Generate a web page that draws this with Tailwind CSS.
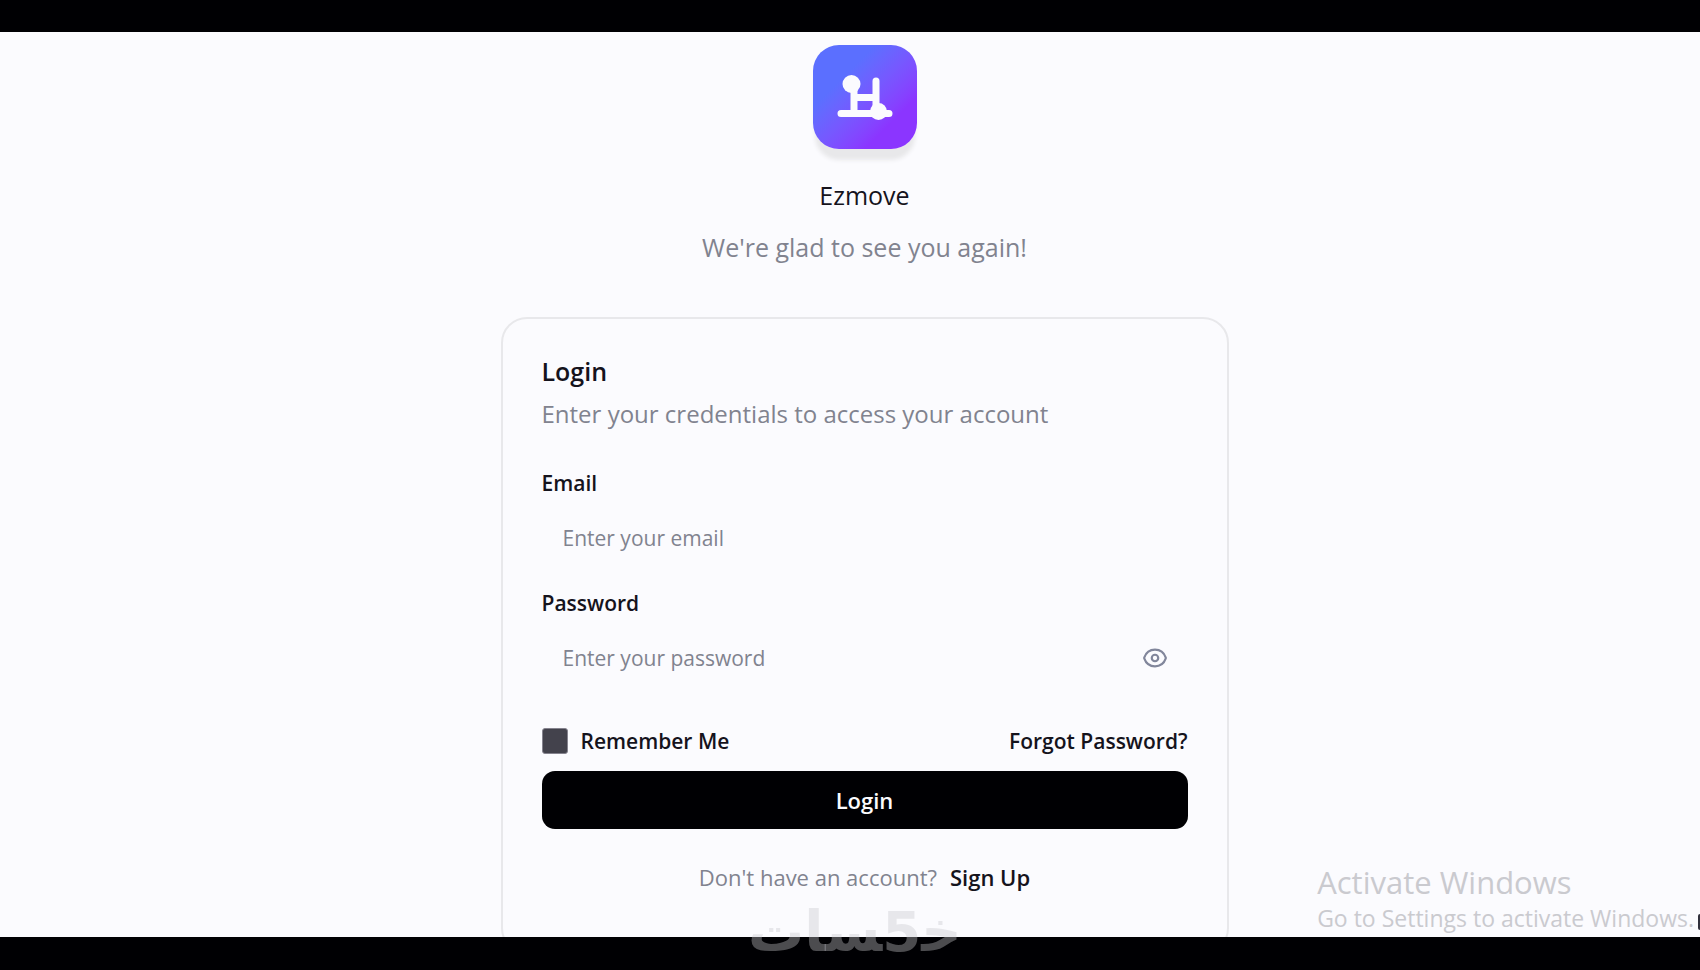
<!DOCTYPE html>
<html lang="en">
<head>
<meta charset="utf-8">
<meta name="viewport" content="width=device-width, initial-scale=1">
<title>Ezmove - Login</title>
<script src="https://cdn.jsdelivr.net/npm/@tailwindcss/browser@4"></script>
</head>
<body class="relative flex h-screen flex-col overflow-hidden bg-[#fbfbfe] font-['Open_Sans','Noto_Sans',sans-serif] text-[#15131c]">
  <div class="h-8 shrink-0 bg-[#000003]"></div>

  <main class="flex min-h-0 flex-1 flex-col items-center overflow-hidden pl-[29px] pt-[13px]">
    <header class="flex flex-col items-center text-center">
      <div class="flex size-[104px] items-center justify-center rounded-[26px] bg-linear-to-br from-[#5b6fff] from-30% to-[#8b35ff] to-75% shadow-[0_13px_4px_-2px_#e8e8ea]">
        <svg class="size-[104px]" viewBox="0 0 104 104" fill="none" stroke="#fbfbfe" stroke-width="7" stroke-linecap="round" aria-hidden="true">
          <path d="M28 68.500H76M41 40V67M63 36V66M41 52.500H63" />
          <circle cx="38.500" cy="39" r="9" fill="#fbfbfe" stroke="none" />
          <circle cx="65.500" cy="66.500" r="8.500" fill="#fbfbfe" stroke="none" />
        </svg>
      </div>
      <h1 class="mt-[26px] text-[25px] leading-10">Ezmove</h1>
      <p class="mt-3 text-[25px] leading-10 text-[#81838f]">We're glad to see you again!</p>
    </header>

    <section class="mt-[50px] w-full max-w-[728px] shrink-0 rounded-[26px] border-2 border-[#e8e8eb] px-[39px] pb-[59px] pt-[39px]">
      <h2 class="text-[25px] font-semibold leading-[26px]">Login</h2>
      <p class="mt-[10px] text-2xl leading-10 text-[#81838f]">Enter your credentials to access your account</p>

      <form class="mt-[37px]">
        <label for="email" class="block text-[21px] font-semibold leading-6">Email</label>
        <input id="email" type="email" placeholder="Enter your email" class="mt-[14px] block h-[58px] w-full rounded-xl bg-transparent px-[21px] text-[21px] placeholder:text-[#81838f]">

        <label for="password" class="mt-6 block text-[21px] font-semibold leading-6">Password</label>
        <div class="mt-[14px] flex h-[58px] items-center">
          <input id="password" type="password" placeholder="Enter your password" class="h-full min-w-0 flex-1 rounded-xl bg-transparent px-[21px] text-[21px] placeholder:text-[#81838f]">
          <button type="button" aria-label="Show password" class="mr-5 text-[#81869b]">
            <svg class="size-[26px]" viewBox="0 0 24 24" fill="none" stroke="currentColor" stroke-width="2" stroke-linecap="round" stroke-linejoin="round" aria-hidden="true">
              <path d="M2.060 12.350a1 1 0 0 1 0-.700C3.700 7 7.500 4.300 12 4.300s8.300 2.700 9.940 7.350a1 1 0 0 1 0 .700C20.300 17 16.500 19.700 12 19.700S3.700 17 2.060 12.350" />
              <circle cx="12" cy="12" r="3" />
            </svg>
          </button>
        </div>

        <div class="mt-[41px] flex items-center justify-between text-[21px] font-semibold leading-[26px]">
          <label for="remember" class="flex items-center gap-[13px]">
            <input id="remember" type="checkbox" class="size-[26px] appearance-none rounded-[3px] border border-[#85838e] bg-[#43424c]">
            Remember Me
          </label>
          <a href="#">Forgot Password?</a>
        </div>
        <button type="submit" class="mt-[17px] h-[58px] w-full rounded-[13px] bg-[#000003] text-[22px] font-semibold text-[#fbfbfe]">Login</button>
      </form>

      <p class="mt-8 flex justify-center gap-[13px] text-[22px] leading-8 text-[#81838f]">Don't have an account? <a href="#" class="font-semibold text-[#15131c]">Sign Up</a></p>
    </section>
  </main>

  <div class="h-[33px] shrink-0 bg-[#000003]"></div>

  <aside class="absolute bottom-9 right-1.5 text-[#cacacf]">
    <p class="text-[31px] leading-10">Activate Windows</p>
    <p class="text-[23px] leading-8">Go to Settings to activate Windows.</p>
  </aside>
  <div class="absolute bottom-10 right-0 h-4 w-0.5 rounded-l-full bg-[#30303c]"></div>
  <div dir="rtl" lang="ar" class="absolute bottom-2 left-[748px] whitespace-nowrap font-['DejaVu_Sans',sans-serif] text-[56px] font-bold leading-[60px] text-[#c8c8cc]/38">خ&zwj;5&zwj;سات</div>
</body>
</html>
